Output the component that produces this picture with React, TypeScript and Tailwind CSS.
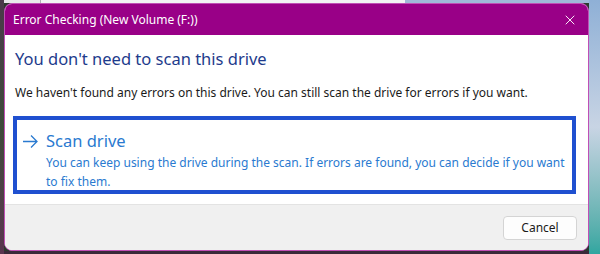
import { X } from "lucide-react";

export default function App() {
  return (
    <div className="flex h-[254px] w-[600px] overflow-hidden bg-[#2c3a2e] font-['Noto_Sans',sans-serif]">
      {/* desktop, left edge */}
      <div className="w-[4px] shrink-0 bg-gradient-to-b from-[#4a3a4a] via-[#3d4a3a] to-[#5a3550]" />

      <div className="flex w-[585px] shrink-0 flex-col">
        {/* desktop, top edge */}
        <div className="flex h-[3px] shrink-0">
          <div className="w-[36px] bg-[#e8e8ea]" />
          <div className="w-px bg-[#b0b0b4]" />
          <div className="w-[364px] bg-[#f2f2f4]" />
          <div className="flex-1 bg-[#9fb8d8]" />
        </div>

        {/* DIALOG */}
        <div className="flex h-[248px] flex-col overflow-hidden rounded-[8px] border border-[#c04fb5] bg-white">
          {/* TITLE BAR */}
          <div className="flex h-[31px] shrink-0 items-center justify-between bg-[#990087] pl-[8px] pr-[10px] text-white">
            <span className="text-[12px] leading-none">Error Checking (New Volume (F:))</span>
            <X size={16} strokeWidth={1.4} />
          </div>

          {/* CONTENT */}
          <div className="flex flex-1 flex-col px-[8px] pt-[13px]">
            <h1 className="pl-[2px] text-[16.5px] leading-[22px] text-[#1e3b8c]">You don't need to scan this drive</h1>
            <p className="mt-[15px] pl-[2px] text-[12px] leading-[16px] text-[#1a1a1a]">
              We haven't found any errors on this drive. You can still scan the drive for errors if you want.
            </p>

            <div className="mt-[15px] mr-[4px] flex h-[78px] gap-[8px] border-[4px] border-[#1f50d0] pl-[5px] pt-[9px]">
              <svg width="16" height="24" viewBox="0 0 16 24" className="shrink-0 text-[#2a7ad0]">
                <path d="M1 12.5H15M9 6.5L15 12.5L9 18.5" fill="none" stroke="currentColor" strokeWidth="1.3" />
              </svg>
              <div className="flex flex-col text-[#2a7ad0]">
                <span className="text-[16.5px] leading-[24px]">Scan drive</span>
                <span className="text-[12px] leading-[19px]">
                  You can keep using the drive during the scan. If errors are found, you can decide if you want
                  <br />
                  to fix them.
                </span>
              </div>
            </div>
          </div>

          {/* FOOTER */}
          <div className="flex h-[46px] shrink-0 items-center justify-end border-t border-[#e3e3e3] bg-[#f0f0f0] pr-[11px]">
            <button className="h-[24px] w-[74px] rounded-[4px] border border-[#d4d4d4] bg-[#fdfdfd] text-[12px] text-[#1a1a1a]">
              Cancel
            </button>
          </div>
        </div>

        {/* desktop, bottom edge */}
        <div className="h-[3px] shrink-0 bg-[#3a2a3a]" />
      </div>

      {/* desktop, right edge */}
      <div className="flex-1 bg-gradient-to-b from-[#8fb0d6] via-[#c8d4e4] to-[#2fa6a0]" />
    </div>
  );
}
